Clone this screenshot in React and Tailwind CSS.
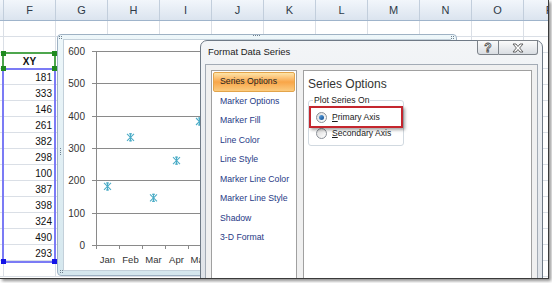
import React from 'react';

const LETTERS = ['F', 'G', 'H', 'I', 'J', 'K', 'L', 'M', 'N', 'O', 'P'];
const CELLS = { 2: 'XY', 3: '181', 4: '333', 5: '146', 6: '261', 7: '382', 8: '298', 9: '100', 10: '387', 11: '398', 12: '324', 13: '490', 14: '293' };
const NAV = ['Series Options', 'Marker Options', 'Marker Fill', 'Line Color', 'Line Style', 'Marker Line Color', 'Marker Line Style', 'Shadow', '3-D Format'];
const MONTHS = ['Jan', 'Feb', 'Mar', 'Apr', 'May', 'Jun', 'Jul', 'Aug', 'Sep', 'Oct', 'Nov', 'Dec'];
const VALUES = [181, 333, 146, 261, 382, 298, 100, 387, 398, 324, 490, 293];

const yOf = (v) => 245 - v * 0.32333;

function Sheet() {
  return (
    <div className="flex flex-col">
      <div className="flex h-[21px] shrink-0 border-b border-[#9fb4cb] bg-gradient-to-b from-[#f2f6fb] to-[#dbe4ef]">
        <div className="w-[4px] shrink-0 border-r border-[#c2cedc]" />
        {LETTERS.map((l) => (
          <div key={l} className="w-[52px] shrink-0 border-r border-[#c2cedc] flex items-center justify-center text-[11px] text-[#2f3a48]">
            {l}
          </div>
        ))}
      </div>
      {Array.from({ length: 16 }).map((_, r) => (
        <div key={r} className="flex h-[16px] shrink-0">
          <div className="w-[4px] shrink-0 border-r border-b border-[#dadfe6]" />
          {LETTERS.map((l, c) => (
            <div
              key={l}
              className={
                'w-[52px] shrink-0 border-r border-b border-[#dadfe6] flex items-center pt-[2px] text-[10px] text-[#111] ' +
                (r === 2 ? 'justify-center font-bold' : 'justify-end pr-[3px]')
              }
            >
              {c === 0 ? CELLS[r] || '' : ''}
            </div>
          ))}
        </div>
      ))}
    </div>
  );
}

function Handle({ className }) {
  return <div className={'absolute w-[5px] h-[5px] ' + className} />;
}

function Selection() {
  return (
    <>
      <div className="absolute left-[2px] top-[52px] w-[54px] h-[18px] border-2 border-[#4ea64e]" />
      <div className="absolute left-[2px] top-[68px] w-[54px] h-[195px] border-2 border-[#7b7bf5]" />
      <Handle className="left-[1px] top-[51px] bg-[#1f8a1f]" />
      <Handle className="left-[52px] top-[51px] bg-[#1f8a1f]" />
      <Handle className="left-[1px] top-[66px] bg-[#1f8a1f]" />
      <Handle className="left-[52px] top-[66px] bg-[#1f8a1f]" />
      <Handle className="left-[1px] top-[259px] bg-[#1414e6]" />
      <Handle className="left-[52px] top-[259px] bg-[#1414e6]" />
    </>
  );
}

function Dots({ cols, rows, className }) {
  return (
    <div className={'absolute grid gap-[1px] ' + className} style={{ gridTemplateColumns: `repeat(${cols}, 1px)` }}>
      {Array.from({ length: cols * rows }).map((_, i) => (
        <div key={i} className="w-[1px] h-[1px] bg-[#6f7f8e]" />
      ))}
    </div>
  );
}

function Star({ x, y }) {
  const s = 3.5;
  return (
    <g stroke="#4bacc6" strokeWidth="1.1" fill="none">
      <line x1={x - s} y1={y - s} x2={x + s} y2={y + s} />
      <line x1={x - s} y1={y + s} x2={x + s} y2={y - s} />
      <line x1={x} y1={y - s - 0.5} x2={x} y2={y + s + 0.5} />
      <line x1={x - 1.5} y1={y - s} x2={x + 1.5} y2={y - s} />
      <line x1={x - 1.5} y1={y + s} x2={x + 1.5} y2={y + s} />
    </g>
  );
}

function Chart() {
  const grid = [0, 100, 200, 300, 400, 500, 600];
  return (
    <div className="absolute left-[57px] top-[34px] w-[400px] h-[242px] rounded-[4px] border border-[#9fb2c4] bg-gradient-to-b from-[#eef7fa] to-[#d5e7ee] px-[5px] py-[4px]">
      <div className="w-full h-full bg-white border border-[#c3d0da] overflow-hidden">
        <svg width="386" height="230" className="block" style={{ fontFamily: "'Liberation Sans', Arial, sans-serif" }}>
          <g transform="translate(-64,-40)">
            {grid.map((v) => {
              const y = Math.round(yOf(v)) + 0.5;
              return (
                <g key={v}>
                  <line x1="92" x2="445" y1={y} y2={y} stroke="#8a8a8a" strokeWidth="1" />
                  <text x="85" y={y + 3.5} textAnchor="end" fontSize="10" fill="#333">
                    {v}
                  </text>
                </g>
              );
            })}
            <line x1="96.5" x2="96.5" y1="51" y2="249" stroke="#8a8a8a" strokeWidth="1" />
            {Array.from({ length: 13 }).map((_, k) => (
              <line key={k} x1={96.5 + 23 * k} x2={96.5 + 23 * k} y1="245" y2="249" stroke="#8a8a8a" strokeWidth="1" />
            ))}
            {MONTHS.map((m, k) => (
              <text key={m} x={107.5 + 23 * k} y="263" textAnchor="middle" fontSize="9.5" fill="#333">
                {m}
              </text>
            ))}
            {VALUES.map((v, k) => (
              <Star key={k} x={107.5 + 23 * k} y={yOf(v)} />
            ))}
          </g>
        </svg>
      </div>
      <Dots cols={2} rows={2} className="left-[1px] top-[1px]" />
      <Dots cols={4} rows={1} className="left-[195px] top-[0px]" />
      <Dots cols={2} rows={2} className="left-[393px] top-[1px]" />
      <Dots cols={1} rows={4} className="left-[2px] top-[113px]" />
      <Dots cols={2} rows={2} className="left-[2px] top-[235px]" />
    </div>
  );
}

function Radio({ checked, label, underline }) {
  return (
    <div className="h-[16px] flex items-center pl-[7px] gap-[5px]">
      <div className="w-[11px] h-[11px] shrink-0 rounded-full border border-[#8b9097] bg-gradient-to-br from-[#dcdcdc] to-[#ffffff] flex items-center justify-center">
        {checked && <div className="w-[5px] h-[5px] rounded-full bg-gradient-to-br from-[#5fa7e6] to-[#0f4c8f]" />}
      </div>
      <span className="text-[8.6px] text-[#1b1b1b] leading-none whitespace-nowrap">
        <span className="underline">{underline}</span>
        {label}
      </span>
    </div>
  );
}

function Dialog() {
  return (
    <div className="absolute left-[200px] top-[40px] w-[343px] h-[250px] rounded-t-[7px] border border-[#6f7a86] bg-gradient-to-b from-[#f3f5f7] to-[#dfe3e8] flex flex-col">
      <div className="relative h-[23px] shrink-0 flex items-center pl-[7px] text-[9.5px] text-[#1b1b1b]">
        Format Data Series
        <div className="absolute right-[4px] top-[-1px] flex">
          <div className="w-[22px] h-[15px] border border-[#7d838a] rounded-bl-[3px] bg-gradient-to-b from-[#fbfbfb] to-[#d9dde2] flex items-center justify-center text-[12px] font-bold leading-none text-white [-webkit-text-stroke:0.8px_#4a4a4a]">
            ?
          </div>
          <div className="w-[39px] h-[15px] border border-l-0 border-[#7d838a] rounded-br-[3px] bg-gradient-to-b from-[#fbfbfb] to-[#d9dde2] flex items-center justify-center">
            <svg width="12" height="10" viewBox="0 0 12 10">
              <path d="M1 1 H4 L6 3.5 L8 1 H11 L7.6 5 L11 9 H8 L6 6.5 L4 9 H1 L4.4 5 Z" fill="#fff" stroke="#555" strokeWidth="0.9" strokeLinejoin="round" />
            </svg>
          </div>
        </div>
      </div>
      <div className="mx-[4px] flex-1 border border-[#a3abb5] bg-[#f0f0f0] p-[5px] flex gap-[6px]">
        <div className="w-[86px] shrink-0 border border-[#a0a0a0] bg-white p-[1px] flex flex-col">
          {NAV.map((n, i) => (
            <div
              key={n}
              className={
                'h-[19.5px] shrink-0 flex items-center whitespace-nowrap text-[8.7px] ' +
                (i === 0
                  ? 'rounded-[2px] border border-[#e3a44a] bg-gradient-to-b from-[#fde4a8] via-[#f8a547] to-[#fbcb7e] text-[#222] pl-[6px]'
                  : 'text-[#1f3a86] pl-[7px]')
              }
            >
              {n}
            </div>
          ))}
        </div>
        <div className="flex-1 border border-[#a0a0a0] bg-white px-[4px] flex flex-col items-start">
          <div className="mt-[4px] h-[18px] flex items-center text-[12px] text-[#333] whitespace-nowrap">Series Options</div>
          <div className="relative mt-[7px] w-[96px] border border-[#d1d9e0] rounded-[3px] pt-[8px] pb-[4px]">
            <span className="absolute left-[4px] top-[-7px] bg-white px-[1px] text-[8.6px] leading-[12px] text-[#1b1b1b] whitespace-nowrap">Plot Series On</span>
            <Radio checked underline="P" label="rimary Axis" />
            <Radio underline="S" label="econdary Axis" />
            <div className="absolute left-[0px] top-[5px] w-[94px] h-[22px] border-2 border-[#c4262e] shadow-[2px_2px_3px_rgba(0,0,0,0.35)]" />
          </div>
        </div>
      </div>
    </div>
  );
}

export default function App() {
  return (
    <div className="w-[552px] h-[283px] bg-white relative overflow-hidden font-['Liberation_Sans',Arial,sans-serif]">
      <div className="relative w-[549px] h-[279px] overflow-hidden border-r border-b border-[#3a3a3a] bg-white shadow-[2px_2px_3px_rgba(0,0,0,0.45)]">
        <Sheet />
        <Selection />
        <Chart />
        <Dialog />
      </div>
    </div>
  );
}
